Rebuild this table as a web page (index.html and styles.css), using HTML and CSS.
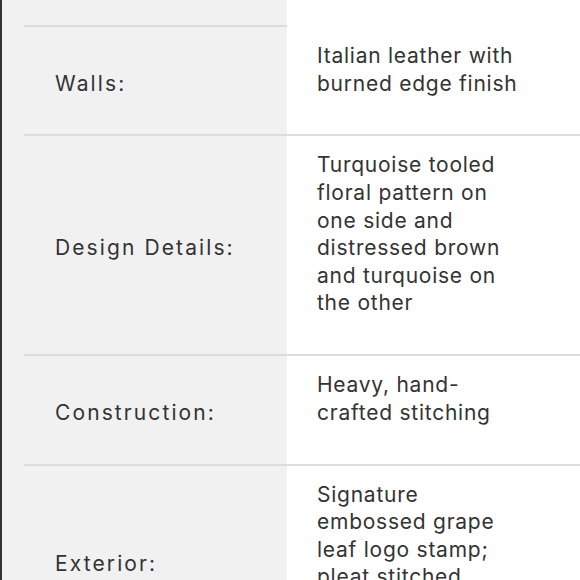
FILE: index.html
```html
<!DOCTYPE html>
<html lang="en">
<head>
<meta charset="utf-8">
<title>Product details</title>
<link rel="stylesheet" href="styles.css">
</head>
<body>
<div class="sheet">
  <div class="row row--tail">
    <div class="label"></div>
    <div class="value"></div>
  </div>
  <div class="row">
    <div class="label">Walls:</div>
    <div class="value"><p>Italian leather with burned edge finish</p></div>
  </div>
  <div class="row">
    <div class="label">Design Details:</div>
    <div class="value"><p>Turquoise tooled floral pattern on one side and distressed brown and turquoise on the other</p></div>
  </div>
  <div class="row">
    <div class="label">Construction:</div>
    <div class="value"><p>Heavy, hand-crafted stitching</p></div>
  </div>
  <div class="row">
    <div class="label">Exterior:</div>
    <div class="value"><p>Signature embossed grape leaf logo stamp; pleat stitched detailing</p></div>
  </div>
</div>
</body>
</html>
```
FILE: styles.css
```css
html, body {
  margin: 0;
  padding: 0;
  background: #ffffff;
}

body {
  font-family: "Inter", "Open Sans", sans-serif;
  color: #333333;
}

.sheet {
  border-left: 2px solid #333333;
  background: #f1f1f1;
  padding-left: 22px;
  min-height: 100vh;
}

.row {
  display: grid;
  grid-template-columns: 263px 1fr;
  border-top: 2px solid #dcdcdc;
}

.row--tail {
  border-top: 0;
  height: 25px;
}

.label {
  display: flex;
  align-items: center;
  padding: 5.6px 0 0 31px;
  font-size: 21px;
  line-height: 27.6px;
  letter-spacing: 2.1px;
}

.value {
  background: #ffffff;
  padding: 15px 60px 37.25px 30px;
  font-size: 21px;
  line-height: 27.6px;
  letter-spacing: 0.75px;
}

.value p {
  margin: 0;
  max-width: 203px;
}
```
